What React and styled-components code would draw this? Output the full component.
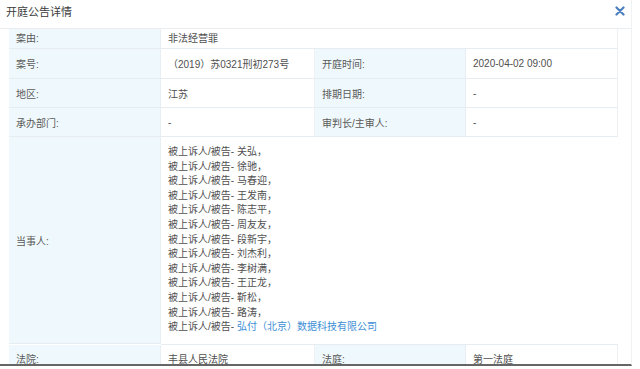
import React from "react";
import styled, { createGlobalStyle } from "styled-components";

const Global = createGlobalStyle`
  html, body {
    margin: 0;
    padding: 0;
    background: #fff;
  }
  body {
    font-family: "Liberation Sans", "Noto Sans CJK SC", sans-serif;
  }
`;

const Modal = styled.div`
  width: 632px;
  height: 366px;
  overflow: hidden;
  background: #fff;
  border-bottom: 2px solid #666;
  border-right: 1px solid #f0f2f4;
  box-sizing: border-box;
`;

const Header = styled.div`
  height: 29px;
  display: flex;
  align-items: center;
  justify-content: space-between;
  padding: 0 6px 0 6px;
  border-bottom: 1px solid #e9edf0;
  box-sizing: border-box;
`;

const Title = styled.div`
  font-size: 11px;
  color: #3a3a3a;
  padding-bottom: 6px;
`;

const Close = styled.button`
  border: 0;
  background: none;
  padding: 0;
  margin: 0 0 6px 0;
  width: 10px;
  height: 10px;
  display: flex;
  cursor: pointer;
`;

const Body = styled.div`
  padding: 0 14px 0 9px;
`;

const Table = styled.div`
  display: grid;
  grid-template-columns: 152px 154px 151px 152px;
  border-right: 1px solid #e6ecf0;
  font-size: 10px;
`;

const Cell = styled.div`
  display: flex;
  align-items: center;
  box-sizing: border-box;
  height: ${(p) => p.$h || 29}px;
  padding: ${(p) => (p.$top ? "0 7px 2px" : "0 7px")};
  grid-column: span ${(p) => p.$span || 1};
  background: ${(p) => (p.$label ? "#eff8fc" : "#fff")};
  color: ${(p) => (p.$label ? "#5a5a5a" : "#505050")};
  border-bottom: 1px solid #e6ecf0;
  border-right: ${(p) => (p.$label ? "1px solid #e8eff3" : "1px solid #eef2f5")};
`;

const Parties = styled.div`
  grid-column: span 3;
  box-sizing: border-box;
  padding: 8px 7px 9px 7px;
  line-height: 14.6px;
  color: #505050;
  background: #fff;
  border-bottom: 1px solid #e6ecf0;
`;

const Party = styled.div`
  white-space: nowrap;
`;

const Link = styled.a`
  color: #3d8fd6;
  text-decoration: none;
`;

const parties = [
  "关弘，",
  "徐驰，",
  "马春迎，",
  "王发南，",
  "陈志平，",
  "周友友，",
  "段新宇，",
  "刘杰利，",
  "李树满，",
  "王正龙，",
  "靳松，",
  "路涛，",
];

export default function App() {
  return (
    <>
      <Global />
      <Modal>
        <Header>
          <Title>开庭公告详情</Title>
          <Close aria-label="关闭">
            <svg width="10" height="10" viewBox="0 0 10 10">
              <path
                d="M1.5 1.5 L8.5 8.5 M8.5 1.5 L1.5 8.5"
                stroke="#4c7fbd"
                strokeWidth="2.2"
                strokeLinecap="round"
              />
            </svg>
          </Close>
        </Header>
        <Body>
          <Table>
            <Cell $label $h={20} $top>案由:</Cell>
            <Cell $span={3} $h={20} $top>非法经营罪</Cell>

            <Cell $label $h={30}>案号:</Cell>
            <Cell $h={30}>（2019）苏0321刑初273号</Cell>
            <Cell $label $h={30}>开庭时间:</Cell>
            <Cell $h={30}>2020-04-02 09:00</Cell>

            <Cell $label>地区:</Cell>
            <Cell>江苏</Cell>
            <Cell $label>排期日期:</Cell>
            <Cell>-</Cell>

            <Cell $label>承办部门:</Cell>
            <Cell>-</Cell>
            <Cell $label>审判长/主审人:</Cell>
            <Cell>-</Cell>

            <Cell $label $h={207}>当事人:</Cell>
            <Parties>
              {parties.map((name) => (
                <Party key={name}>被上诉人/被告- {name}</Party>
              ))}
              <Party>
                被上诉人/被告- <Link href="#">弘付（北京）数据科技有限公司</Link>
              </Party>
            </Parties>

            <Cell $label>法院:</Cell>
            <Cell>丰县人民法院</Cell>
            <Cell $label>法庭:</Cell>
            <Cell>第一法庭</Cell>
          </Table>
        </Body>
      </Modal>
    </>
  );
}
